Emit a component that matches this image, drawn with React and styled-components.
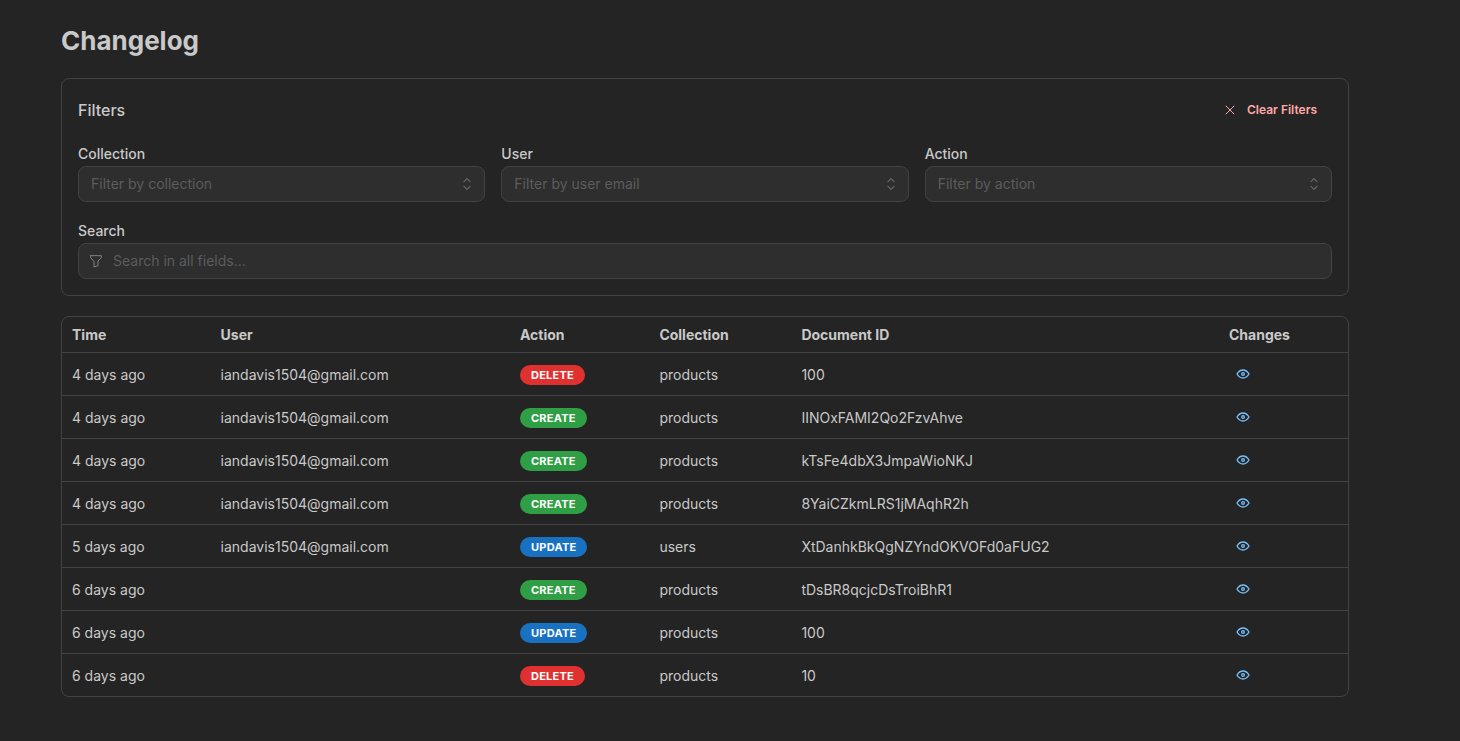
import React from 'react';
import styled, { createGlobalStyle } from 'styled-components';

const GlobalStyle = createGlobalStyle`
  html, body {
    margin: 0;
    background: #242424;
    color: #c9c9c9;
    font-family: Inter, "Liberation Sans", sans-serif;
    font-size: 14px;
  }
`;

const Page = styled.div`
  width: 1288px;
  margin-left: 61px;
  padding: 24px 0 44px;
`;

const Title = styled.h1`
  margin: 0 0 20px;
  font-size: 26px;
  line-height: 34px;
  font-weight: 700;
  color: #c9c9c9;
`;

const FilterCard = styled.section`
  box-sizing: border-box;
  height: 218px;
  padding: 16px;
  border: 1px solid #424242;
  border-radius: 8px;
  margin-bottom: 20px;
`;

const FilterHeader = styled.div`
  display: flex;
  align-items: center;
  justify-content: space-between;
  height: 30px;
  margin-bottom: 18px;
`;

const FilterTitle = styled.h3`
  margin: 0;
  font-size: 16px;
  font-weight: 500;
  color: #c9c9c9;
`;

const ClearButton = styled.button`
  display: flex;
  align-items: center;
  gap: 9px;
  height: 30px;
  padding: 0 15px 1px;
  border: 0;
  background: transparent;
  color: #ffa8a8;
  font-family: inherit;
  font-size: 12px;
  font-weight: 600;
  svg {
    margin-top: 1px;
  }
`;

const FieldRow = styled.div`
  display: grid;
  grid-template-columns: repeat(3, 1fr);
  gap: 16px;
  margin-bottom: 18px;
`;

const Field = styled.div`
  display: flex;
  flex-direction: column;
`;

const Label = styled.label`
  font-size: 14px;
  line-height: 22px;
  font-weight: 500;
  color: #c9c9c9;
  height: 23px;
`;

const InputBox = styled.div`
  box-sizing: border-box;
  display: flex;
  align-items: center;
  height: 36px;
  padding: 0 7px 0 ${(p) => (p.$withIcon ? '9px' : '12px')};
  background: #2e2e2e;
  border: 1px solid #424242;
  border-radius: 8px;
  color: #828282;
`;

const Placeholder = styled.span`
  flex: 1;
  font-size: 14px;
  color: #5c5c5c;
  margin-left: ${(p) => (p.$withIcon ? '9px' : '0')};
  margin-bottom: 2px;
`;

const SelectorIcon = styled.svg`
  color: #666666;
`;

const TableWrap = styled.div`
  border: 1px solid #424242;
  border-radius: 8px;
  overflow: hidden;
`;

const Table = styled.table`
  width: 100%;
  table-layout: fixed;
  border-collapse: collapse;
`;

const HeadCell = styled.th`
  height: 35px;
  padding: 0 10px;
  text-align: left;
  font-size: 14px;
  font-weight: 700;
  color: #c9c9c9;
  border-bottom: 1px solid #424242;
`;

const Cell = styled.td`
  height: 42px;
  padding: 0 10px;
  font-size: 14px;
  color: #c9c9c9;
  border-bottom: 1px solid #424242;
  tr:last-child & {
    border-bottom: 0;
  }
`;

const badgeColors = {
  delete: '#e03131',
  create: '#2f9e44',
  update: '#1971c2',
};

const Badge = styled.span`
  display: inline-flex;
  align-items: center;
  height: 20px;
  margin-top: 2px;
  padding: 0 11px;
  border-radius: 10px;
  background: ${(p) => badgeColors[p.$action]};
  color: #fff;
  font-size: 11px;
  font-weight: 700;
  letter-spacing: 0.25px;
  text-transform: uppercase;
  vertical-align: middle;
`;

const EyeButton = styled.button`
  display: flex;
  align-items: center;
  justify-content: center;
  width: 28px;
  height: 28px;
  padding: 0;
  border: 0;
  background: transparent;
  color: #74c0fc;
`;

const Icon = ({ size = 16, children, width = 2 }) => (
  <svg width={size} height={size} viewBox="0 0 24 24" fill="none" stroke="currentColor" strokeWidth={width} strokeLinecap="round" strokeLinejoin="round">
    {children}
  </svg>
);

const Selector = () => (
  <SelectorIcon width="20" height="20" viewBox="0 0 15 15" fill="currentColor">
    <path d="M4.93179 5.43179C4.75605 5.60753 4.75605 5.89245 4.93179 6.06819C5.10753 6.24392 5.39245 6.24392 5.56819 6.06819L7.49999 4.13638L9.43179 6.06819C9.60753 6.24392 9.89245 6.24392 10.0682 6.06819C10.2439 5.89245 10.2439 5.60753 10.0682 5.43179L7.81819 3.18179C7.73379 3.0974 7.61933 3.04999 7.49999 3.04999C7.38064 3.04999 7.26618 3.0974 7.18179 3.18179L4.93179 5.43179ZM10.0682 9.56819C10.2439 9.39245 10.2439 9.10753 10.0682 8.93179C9.89245 8.75606 9.60753 8.75606 9.43179 8.93179L7.49999 10.8636L5.56819 8.93179C5.39245 8.75606 5.10753 8.75606 4.93179 8.93179C4.75605 9.10753 4.75605 9.39245 4.93179 9.56819L7.18179 11.8182C7.26618 11.9026 7.38064 11.95 7.49999 11.95C7.61933 11.95 7.73379 11.9026 7.81819 11.8182L10.0682 9.56819Z" />
  </SelectorIcon>
);

const columns = [
  { name: 'Time', width: 148.6 },
  { name: 'User', width: 299.4 },
  { name: 'Action', width: 139.4 },
  { name: 'Collection', width: 142 },
  { name: 'Document ID', width: 427.6 },
  { name: 'Changes' },
];

const email = 'iandavis1504@gmail.com';

const rows = [
  ['4 days ago', email, 'delete', 'products', '100'],
  ['4 days ago', email, 'create', 'products', 'IINOxFAMI2Qo2FzvAhve'],
  ['4 days ago', email, 'create', 'products', 'kTsFe4dbX3JmpaWioNKJ'],
  ['4 days ago', email, 'create', 'products', '8YaiCZkmLRS1jMAqhR2h'],
  ['5 days ago', email, 'update', 'users', 'XtDanhkBkQgNZYndOKVOFd0aFUG2'],
  ['6 days ago', '', 'create', 'products', 'tDsBR8qcjcDsTroiBhR1'],
  ['6 days ago', '', 'update', 'products', '100'],
  ['6 days ago', '', 'delete', 'products', '10'],
];

const selects = [
  { label: 'Collection', placeholder: 'Filter by collection' },
  { label: 'User', placeholder: 'Filter by user email' },
  { label: 'Action', placeholder: 'Filter by action' },
];

const App = () => (
  <Page>
    <GlobalStyle />
    <Title>Changelog</Title>
    <FilterCard>
      <FilterHeader>
        <FilterTitle>Filters</FilterTitle>
        <ClearButton>
          <Icon size={16} width={1.5}>
            <path d="M18 6l-12 12" />
            <path d="M6 6l12 12" />
          </Icon>
          Clear Filters
        </ClearButton>
      </FilterHeader>
      <FieldRow>
        {selects.map((item) => (
          <Field key={item.label}>
            <Label>{item.label}</Label>
            <InputBox>
              <Placeholder>{item.placeholder}</Placeholder>
              <Selector />
            </InputBox>
          </Field>
        ))}
      </FieldRow>
      <Field>
        <Label>Search</Label>
        <InputBox $withIcon>
          <Icon size={16} width={1.5}>
            <path d="M4 4h16v2.172a2 2 0 0 1 -.586 1.414l-4.414 4.414v7l-6 2v-8.5l-4.48 -4.928a2 2 0 0 1 -.52 -1.345v-2.227z" />
          </Icon>
          <Placeholder $withIcon>Search in all fields...</Placeholder>
        </InputBox>
      </Field>
    </FilterCard>
    <TableWrap>
      <Table>
        <colgroup>
          {columns.map((col) => (
            <col key={col.name} style={col.width ? { width: col.width } : undefined} />
          ))}
        </colgroup>
        <thead>
          <tr>
            {columns.map((col) => (
              <HeadCell key={col.name}>{col.name}</HeadCell>
            ))}
          </tr>
        </thead>
        <tbody>
          {rows.map((row, index) => (
            <tr key={index}>
              <Cell>{row[0]}</Cell>
              <Cell>{row[1]}</Cell>
              <Cell>
                <Badge $action={row[2]}>{row[2]}</Badge>
              </Cell>
              <Cell>{row[3]}</Cell>
              <Cell>{row[4]}</Cell>
              <Cell>
                <EyeButton aria-label="View changes">
                  <Icon size={16}>
                    <path d="M10 12a2 2 0 1 0 4 0a2 2 0 0 0 -4 0" />
                    <path d="M21 12c-2.4 4 -5.4 6 -9 6c-3.6 0 -6.6 -2 -9 -6c2.4 -4 5.4 -6 9 -6c3.6 0 6.6 2 9 6" />
                  </Icon>
                </EyeButton>
              </Cell>
            </tr>
          ))}
        </tbody>
      </Table>
    </TableWrap>
  </Page>
);

export default App;
